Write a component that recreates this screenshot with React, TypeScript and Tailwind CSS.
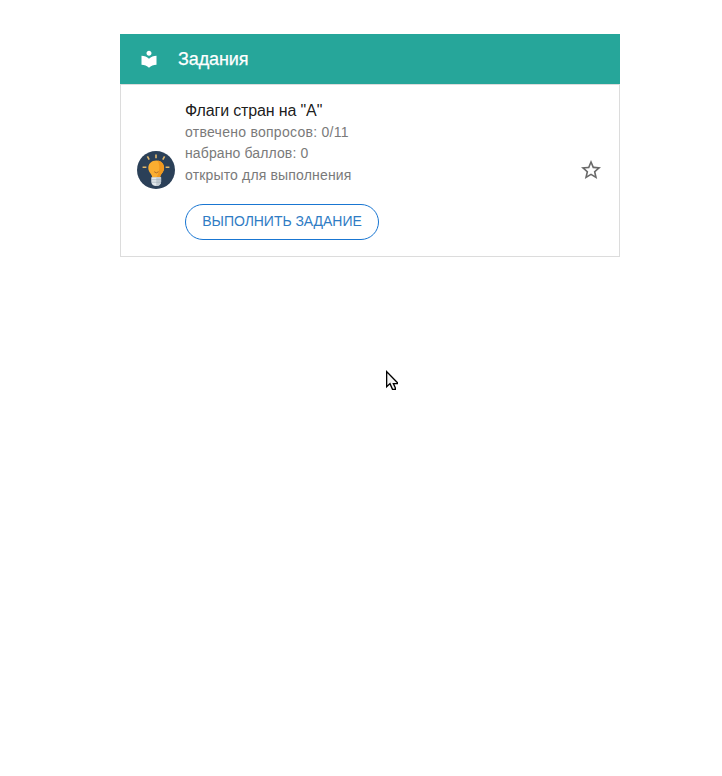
import { MdLocalLibrary, MdStarBorder } from "react-icons/md";

function BulbAvatar() {
  return (
    <svg className="block size-[38px] shrink-0" viewBox="0 0 38 38">
      <circle cx="19" cy="19" r="19" fill="#2b4058" />
      <g stroke="#e3b86c" strokeWidth="1.6">
        <path d="M19 3.4v3.8M10.4 5.4l1.8 3.3M27.6 5.4l-1.8 3.3M5.6 16.3h3.8M28.6 16.3h3.8" />
      </g>
      <path d="M19.2 9.5c-4.7 0-7.9 3.2-7.9 7.5 0 4.6 3.7 5.3 4 9.7h7.8c.3-4.4 4-5.1 4-9.7 0-4.3-3.2-7.5-7.9-7.5z" fill="#fbae30" />
      <path d="M20.5 9.6c4 .5 6.6 3.4 6.6 7.4 0 4.6-3.7 5.3-4 9.7h-3.9c3.5-5 4.3-12 1.3-17.1z" fill="#f0981f" />
      <path d="M17.2 20.7l2.1 1.2 2.3-1.2" fill="none" stroke="#a8682a" strokeWidth=".9" />
      <path d="M14.3 26.3h9.8v4.4c0 2.7-2.2 4.3-4.9 4.3s-4.9-1.6-4.9-4.3z" fill="#e3e8eb" />
      <path d="M19.2 26.3h4.9v4.4c0 2.7-2.2 4.3-4.9 4.3z" fill="#c3ccd2" />
      <path d="M14.3 28.7h9.8M14.3 31.2h9.8" stroke="#9aa7b1" strokeWidth=".6" />
    </svg>
  );
}

function Pointer() {
  return (
    <svg className="absolute left-[386px] top-[370px] h-[21px] w-[13px]" viewBox="0 0 13 21">
      <path d="M.6 1.6v15.2l3.4-3.2 2.5 5.8h2.8v-1.6l-1.9-4.2h3.9v-1.1z" fill="#f4f4f4" stroke="#000" strokeWidth="1.4" />
    </svg>
  );
}

export default function App() {
  return (
    <div className="relative min-h-[776px] bg-white pl-[120px] pt-[34px] font-['Liberation_Sans',Arial,sans-serif]">
      <section className="w-[500px]">
        <header className="flex h-[50px] items-center bg-[#26a69a] pl-[19px] text-white">
          <MdLocalLibrary className="size-5" />
          <h1 className="ml-[19px] text-[18px] leading-6 tracking-[-0.1px] [-webkit-text-stroke:0.25px_white]">Задания</h1>
        </header>
        <div className="flex h-[173px] items-center border border-[#dcdcdc] pl-4 pr-4">
          <div className="mb-0.5">
            <BulbAvatar />
          </div>
          <div className="ml-[10px] flex-1">
            <h2 className="-mt-px text-base leading-[22px] tracking-[-0.14px] text-black/90">Флаги стран на "А"</h2>
            <div className="text-[14px] leading-[21.5px] text-[#7a7a7a]">
              <p className="tracking-[0.27px]">отвечено вопросов: 0/11</p>
              <p className="tracking-[0.12px]">набрано баллов: 0</p>
              <p className="tracking-[0.16px]">открыто для выполнения</p>
            </div>
            <button className="mt-[18px] flex h-9 w-[194px] items-center justify-center rounded-full border border-[#1976d2] pb-0.5 text-[14px] tracking-[-0.04px] text-[#2f7cc4]">
              ВЫПОЛНИТЬ ЗАДАНИЕ
            </button>
          </div>
          <MdStarBorder className="mb-0.5 size-6 text-[#6a6a6a]" />
        </div>
      </section>
      <Pointer />
    </div>
  );
}
